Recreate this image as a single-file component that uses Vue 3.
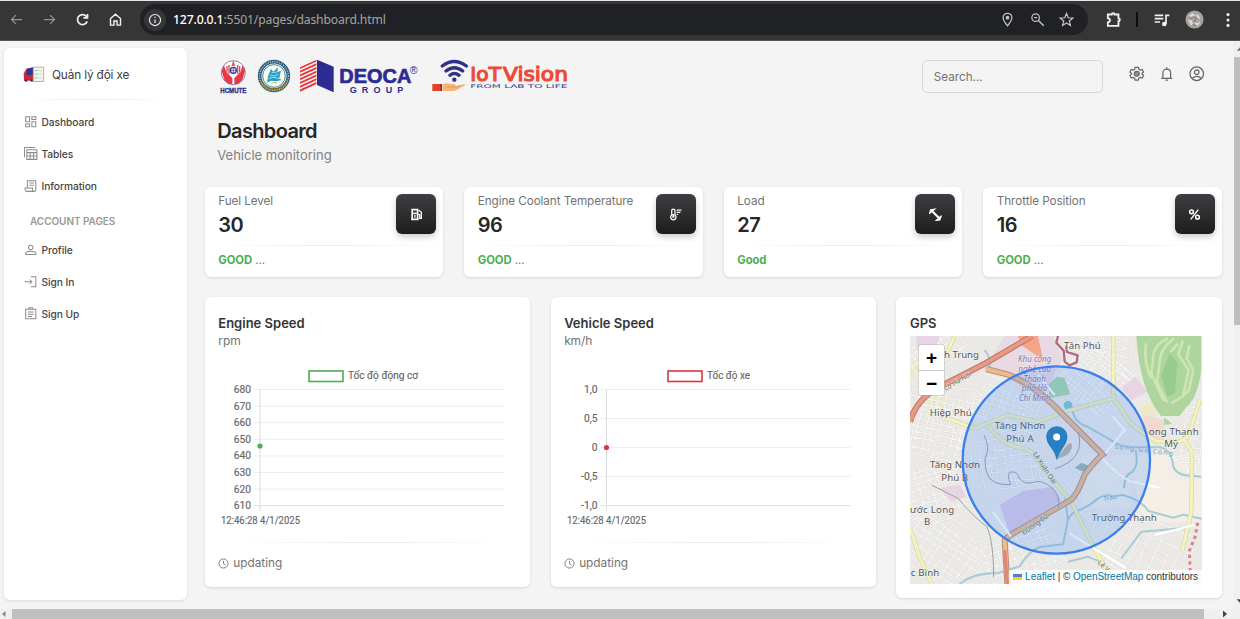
<script setup>
const navItems = [
  { icon: 'dash', label: 'Dashboard' },
  { icon: 'table', label: 'Tables' },
  { icon: 'info', label: 'Information' },
]
const accountItems = [
  { icon: 'profile', label: 'Profile' },
  { icon: 'signin', label: 'Sign In' },
  { icon: 'signup', label: 'Sign Up' },
]
const icons = {
  dash: 'M3 3h7v9H3zM14 3h7v5h-7zM3 16h7v5H3zM14 12h7v9h-7z',
  table: 'M1 18V1h19M5 5h18v17H5zM5 10h18M5 16h18M11 10v12M17 10v12',
  info: 'M6 16V3h15v16a3 3 0 0 1-3 3H5a3 3 0 0 1-3-3v-3h13v3a3 3 0 0 0 3 3M9.500 7h8M9.500 11h8',
  profile: 'M12 4a4 4 0 1 0 .01 0zM3 20.500v-2c0-5 18-5 18 0v2z',
  signin: 'M12 3h9v18h-9M1 12h13M10 8l4 4-4 4',
  signup: 'M3 4h18v17H3zM9 4V1.500h6V4M7 9h10M7 13h10M7 17h7',
}
const stats = [
  { label: 'Fuel Level', value: '30', status: 'GOOD', tail: '...', icon: 'fuel' },
  { label: 'Engine Coolant Temperature', value: '96', status: 'GOOD', tail: '...', icon: 'temp' },
  { label: 'Load', value: '27', status: 'Good', tail: '', icon: 'load' },
  { label: 'Throttle Position', value: '16', status: 'GOOD', tail: '...', icon: 'pct' },
]
const charts = [
  {
    title: 'Engine Speed', unit: 'rpm', legend: 'Tốc độ động cơ', legendX: 91, legendW: 70, color: '#4caf50',
    ticks: ['680', '670', '660', '650', '640', '630', '620', '610'], step: 16.6, dotY: 81, axis: 42, right: 286,
  },
  {
    title: 'Vehicle Speed', unit: 'km/h', legend: 'Tốc độ xe', legendX: 104, legendW: 43, color: '#d9363e',
    ticks: ['1,0', '0,5', '0', '-0,5', '-1,0'], step: 29.05, dotY: 82.5, axis: 42.500, right: 286.500,
  },
]
const stripes = Array.from({ length: 8 }, (_, i) => i * 11.3)

// Minor streets: neighbourhoods, each with its own direction and block size
const districts = [
  { x: 120, y: 170, w: 200, h: 130, a: -32, s: 17 },
  { x: 130, y: 390, w: 240, h: 230, a: 12, s: 21 },
  { x: 110, y: 590, w: 230, h: 190, a: -18, s: 20 },
  { x: 150, y: 775, w: 280, h: 190, a: 33, s: 23 },
  { x: 330, y: 350, w: 210, h: 170, a: 20, s: 20 },
  { x: 350, y: 510, w: 230, h: 160, a: -8, s: 24 },
  { x: 590, y: 250, w: 230, h: 220, a: 39, s: 16 },
  { x: 380, y: 780, w: 260, h: 160, a: -20, s: 22 },
  { x: 740, y: 770, w: 320, h: 190, a: 24, s: 33 },
  { x: 890, y: 420, w: 90, h: 280, a: 8, s: 19 },
  { x: 600, y: 560, w: 230, h: 180, a: -38, s: 46 },
  { x: 640, y: 150, w: 160, h: 110, a: 12, s: 21 },
].map((d) => {
  const parts = []
  const { w, h, s } = d
  for (let i = 0; i * s < w; i++) {
    const j = (i * 7) % 5
    parts.push(`M${-w / 2 + i * s + j} ${-h / 2 + j * 8}l${j - 2} ${h * 0.4}l${(i % 3) * 5 - 5} ${h * 0.5 - j * 8}`)
  }
  for (let i = 0; i * s < h; i++) {
    const j = (i * 3) % 4
    parts.push(`M${-w / 2 + j * 9} ${-h / 2 + i * s + j}l${w * 0.45} ${j * 3 - 4}l${w * 0.48 - j * 9} ${(i % 3) * 6 - 6}`)
  }
  return { path: parts.join(''), transform: `translate(${d.x} ${d.y}) rotate(${d.a})` }
})
</script>

<template>
  <div class="screen">
    <header class="browser">
      <div class="navs">
        <svg class="dim" viewBox="0 0 24 24"><path d="M21 12H4M11 5l-7 7 7 7" /></svg>
        <svg class="dim" viewBox="0 0 24 24"><path d="M3 12h17M13 5l7 7-7 7" /></svg>
        <svg viewBox="0 0 24 24"><path d="M19.500 15a8 8 0 1 1-1.800-8.500L20 9M20 3v6.500h-6.500" stroke-width="2.800" /></svg>
        <svg viewBox="0 0 24 24"><path d="M4 10.500l8-7 8 7V21h-5.500v-6.500h-5V21H4z" stroke-width="2.300" /></svg>
      </div>
      <div class="address">
        <span class="site"><svg viewBox="0 0 24 24"><circle cx="12" cy="12" r="9.500" /><path d="M12 11v6M12 6.500v2" /></svg></span>
        <span class="url"><b>127.0.0.1</b>:5501/pages/dashboard.html</span>
        <div class="addr-icons">
          <svg viewBox="0 0 24 24"><path d="M12 22C8 17 5 13 5 9a7 7 0 0 1 14 0c0 4-3 8-7 13z" /><circle cx="12" cy="9" r="2" fill="currentColor" /></svg>
          <svg viewBox="0 0 24 24"><circle cx="9" cy="9" r="6" /><path d="M13.500 13.500L22 22M6.500 9h5" stroke-width="2.300" /></svg>
          <svg viewBox="0 0 24 24"><path d="M12 2.500l2.800 6.700 7.200.6-5.500 4.700 1.700 7L12 17.700l-6.200 3.800 1.700-7L2 9.800l7.200-.6z" /></svg>
        </div>
      </div>
      <div class="tools">
        <svg class="ext" viewBox="0 0 24 24"><path d="M4 5h5.500a2 2 0 0 1 4 0H19v5.500a2 2 0 0 1 0 4V21H4v-5c4-.5 4-5.500 0-6z" stroke-width="2.600" /></svg>
        <i class="divider"></i>
        <svg class="queue" viewBox="0 0 24 24"><path d="M1 5h13M1 10h13M1 15h8M18 18V5h5" stroke-width="2.500" /><circle cx="15.500" cy="18" r="2.500" fill="currentColor" /></svg>
        <svg class="avatar" viewBox="0 0 20 20"><circle cx="10" cy="10" r="9.500" fill="#aaa2a1" stroke="none" /><path d="M4 6l4-3 3 3-4 2zM11 4l4 2 1 4-3-2zM3 10l4 1 2 4-3 1zM11 11l5 2-3 4-3-3z" fill="#ddd7d5" stroke="none" /><path d="M5 9l4-2 3 2-2 3 4 1M8 15l4 2" stroke="#766d6e" stroke-width="1" /></svg>
        <svg class="more" viewBox="0 0 6 20"><g fill="currentColor" stroke="none"><circle cx="3" cy="4" r="1.700" /><circle cx="3" cy="10" r="1.700" /><circle cx="3" cy="16" r="1.700" /></g></svg>
      </div>
    </header>

    <div class="page">
      <aside class="sidebar">
        <div class="brand">
          <svg viewBox="0 0 66 50">
            <path d="M2 22l8-14 22-5v41H3z" fill="#d4283c" /><path d="M12 8l19-5v22l-22 3z" fill="#303590" /><path d="M3 28h27v13H3z" fill="#c92639" />
            <circle cx="9" cy="43" r="4" fill="#453140" /><circle cx="26" cy="43" r="4" fill="#453140" />
            <path d="M31 3h31v43H31z" fill="#f3f6ed" stroke="#e0a184" stroke-width="3" />
            <path d="M36 12l3 3 4-5M36 23l3 3 4-5M36 34l3 3 4-5" stroke="#40ac98" stroke-width="2" fill="none" /><path d="M46 13h11M46 24h11M46 35h11" stroke="#b1cabb" stroke-width="2" />
          </svg>
          <span>Quản lý đội xe</span>
        </div>
        <i class="fade-line"></i>
        <nav>
          <a v-for="n in navItems" :key="n.label"><svg viewBox="0 0 24 24"><path :d="icons[n.icon]" /></svg>{{ n.label }}</a>
          <h6>ACCOUNT PAGES</h6>
          <a v-for="n in accountItems" :key="n.label"><svg viewBox="0 0 24 24"><path :d="icons[n.icon]" /></svg>{{ n.label }}</a>
        </nav>
      </aside>

      <main>
        <div class="topbar">
          <svg class="logos" viewBox="54 36 1056 117">
            <circle cx="100" cy="83" r="36" fill="#fff" stroke="#8b83b0" stroke-width="3" />
            <path d="M100 45l-6 18h12z" fill="#ef5b61" />
            <path d="M97 117V99L79 82l-7-21-7 17 8 27 13 12zM103 117V99l18-17 7-21 7 17-8 27-13 12z" fill="#e43a46" />
            <path d="M81 83V63M87 87V60M119 83V63M113 87V60" stroke="#e34854" stroke-width="4" />
            <circle cx="100" cy="76" r="9" fill="#f2f2fb" stroke="#34388f" stroke-width="4" /><path d="M91 76h18M100 67v18" stroke="#34388f" stroke-width="2" />
            <text x="61" y="143" class="arial" font-size="20" font-weight="700" fill="#2e3184" textLength="78" lengthAdjust="spacingAndGlyphs" stroke="#2e3184" stroke-width="1">HCMUTE</text>
            <circle cx="222" cy="93" r="43" fill="#ecf5ef" stroke="#345f80" stroke-width="11" />
            <path d="M183 110a43 43 0 0 0 78 0" fill="none" stroke="#756f37" stroke-width="10" />
            <circle cx="222" cy="93" r="43" fill="none" stroke="#b3cfd0" stroke-width="4" stroke-dasharray="3 4" />
            <circle cx="222" cy="93" r="34" fill="#f5faf5" stroke="#488c90" stroke-width="3" />
            <path d="M204 94l9-22 7 8 14-13-2 15 11-5-5 22 6 6-15 4-16-2-12 6z" fill="#269fc7" />
            <path d="M210 90l12 3 14-5M215 83l16-2M205 100l16-3 20 4" stroke="#e3f2f5" stroke-width="2" fill="none" /><path d="M215 113h16" stroke="#d3b47d" stroke-width="3" />
            <clipPath id="stripeClip"><path d="M300 66l50-22v76l-50 23z" /></clipPath>
            <g clip-path="url(#stripeClip)" stroke="#e6363d" stroke-width="5.500"><path v-for="s in stripes" :key="s" :d="`M298 ${70 + s}l54-25`" /></g>
            <path d="M351 44l50 21v77l-50-22z" fill="#2c2b92" />
            <text x="418" y="113" class="arial" font-size="59" font-weight="700" fill="#2c2b92" textLength="216" lengthAdjust="spacingAndGlyphs" stroke="#2c2b92" stroke-width="2">DEOCA</text>
            <text x="629" y="87" class="arial" font-size="32" fill="#2c2b92">®</text>
            <text x="449" y="143" class="arial" font-size="27" font-weight="700" fill="#2c2b92" textLength="161">GROUP</text>
            <g fill="none" stroke="#303187" stroke-width="10" stroke-linecap="round"><path d="M727 63q35-27 72 0M738 78q25-20 50 0M750 91q13-11 27 0" /></g>
            <circle cx="763" cy="104" r="6.500" fill="#303187" />
            <path d="M697 117h29v21h-29z" fill="#e44127" /><path d="M720 117h6v21h-6z" fill="#a72f34" />
            <path d="M727 119q12-8 23-2h14q6 4-1 8l29-8q10 0-4 8l-25 13h-36z" fill="#f2b574" /><path d="M740 126h24l18-4" stroke="#d98d58" stroke-width="2" fill="none" />
            <g class="tech" font-size="58" fill="#ee4937" stroke="#ee4937" stroke-width="3.500"><text x="811" y="107" textLength="92" lengthAdjust="spacingAndGlyphs">IoT</text><text x="909" y="107" textLength="195" lengthAdjust="spacingAndGlyphs">Vision</text></g>
            <text x="811" y="130" class="tech" font-size="15" font-weight="500" fill="#3e3f91" textLength="291" lengthAdjust="spacingAndGlyphs">FROM LAB TO LIFE</text>
          </svg>
          <div class="search">Search...</div>
          <div class="user-icons">
            <svg viewBox="0 0 24 24"><path d="M9.500 2h5l.7 3 2.300 1.300 3-1 2 4-2.300 2v1.400l2.300 2-2 4-3-1-2.300 1.300-.7 3h-5l-.7-3-2.300-1.300-3 1-2-4 2.300-2v-1.400l-2.300-2 2-4 3 1L8.800 5z" /><circle cx="12" cy="12" r="3.800" fill="#666" fill-opacity=".7" /></svg>
            <svg viewBox="0 0 24 24"><path d="M3.500 19h17M6 19v-8c0-8 12-8 12 0v8M12 5V2M10 22h4" /></svg>
            <svg viewBox="0 0 24 24"><circle cx="12" cy="12" r="10.500" /><circle cx="12" cy="9.500" r="3.500" /><path d="M5 19q7-6 14 0" /></svg>
          </div>
        </div>
        <h1>Dashboard</h1>
        <p class="sub">Vehicle monitoring</p>

        <section class="stats">
          <article v-for="s in stats" :key="s.label" class="card stat">
            <div class="stat-head">
              <div><p>{{ s.label }}</p><strong>{{ s.value }}</strong></div>
              <span class="tile">
                <svg viewBox="0 0 24 24">
                  <template v-if="s.icon === 'fuel'"><path d="M4 3h10v18H4zM2 21h14M6 10h6" stroke-width="3" /><path d="M16 4l5 4v11h-3v-7h-3M9 13v5" stroke-width="2.300" /></template>
                  <template v-else-if="s.icon === 'temp'"><path d="M5 13V5a3 3 0 0 1 6 0v8a5 5 0 1 1-6 0zM14 4h9M14 8h7M14 12h3" stroke-width="2.300" /><path d="M8 11v7" stroke-width="4" /></template>
                  <template v-else-if="s.icon === 'load'"><path d="M6 6l12 12" stroke-width="4" /><path d="M1 10l2-7 8-1zM23 14l-3 8-7 1z" fill="currentColor" stroke-width="2" /></template>
                  <template v-else><circle cx="6.500" cy="7" r="3.500" stroke-width="2.700" /><circle cx="17.500" cy="17" r="3.500" stroke-width="2.700" /><path d="M19 3L5 21" stroke-width="2.700" /></template>
                </svg>
              </span>
            </div>
            <i class="fade-line"></i>
            <div class="status"><b>{{ s.status }}</b> {{ s.tail }}</div>
          </article>
        </section>

        <section class="panels">
          <article v-for="c in charts" :key="c.title" class="card chart">
            <h2>{{ c.title }}</h2>
            <p>{{ c.unit }}</p>
            <svg class="plot" viewBox="0 0 298 170">
              <rect :x="c.legendX" y="6" width="34" height="10.500" fill="none" :stroke="c.color" stroke-width="1.600" />
              <text :x="c.legendX + 39" y="13.500" :textLength="c.legendW" lengthAdjust="spacingAndGlyphs">{{ c.legend }}</text>
              <template v-for="(t, i) in c.ticks" :key="t">
                <path :d="`M${c.axis - 6} ${24.500 + i * c.step}H${c.right}`" :stroke="i === c.ticks.length - 1 ? '#dfdfdf' : '#eeeeee'" />
                <text :x="c.axis - 9" :y="28 + i * c.step" text-anchor="end">{{ t }}</text>
              </template>
              <path :d="`M${c.axis} 24V146`" stroke="#dcdcdc" />
              <circle :cx="c.axis" :cy="c.dotY" r="2.600" :fill="c.color" />
              <text x="3" y="158.500" textLength="79" lengthAdjust="spacingAndGlyphs">12:46:28 4/1/2025</text>
            </svg>
            <i class="fade-line"></i>
            <footer><svg viewBox="0 0 24 24"><circle cx="12" cy="12" r="10" /><path d="M12 6v6.500l4.500 3" /></svg>updating</footer>
          </article>

          <article class="card gps">
            <h2>GPS</h2>
            <div class="map">
              <svg viewBox="46 123 876 744" preserveAspectRatio="none">
                <path d="M46 123h876v744H46z" fill="#ebe9e6" />
                <path d="M700 480h222v200H745zM560 480h150v160H560z" fill="#f3eee6" />
                <path d="M46 210q45-65 120-55l10 18-60 45-70 30zM75 300h90l-20 35H78zM735 345l55-42 25 20-50 50z" fill="#f0e8b7" opacity=".7" />
                <g v-for="(d, i) in districts" :key="i" :transform="d.transform" fill="none"><path :d="d.path" stroke="#d6d5d3" stroke-width="5" /><path :d="d.path" stroke="#f8f7f5" stroke-width="3.500" /></g>
                <path d="M330 123h145l28 70-60 120-120-75-60-10z" fill="#e8d9e4" /><path d="M370 123h60l15 72-65-45z" fill="#f5a488" />
                <path d="M315 630l70-42 90-12 25 42-155 97z" fill="#dbcae4" /><path d="M65 123h70l-10 30-60 5zM135 580l60-12 20 38-45 14zM680 280l40-35 40 45-50 25z" fill="#e7d5e4" />
                <path d="M745 360l65 15-5 58-70-15z" fill="#f2d8ce" />
                <path d="M725 123h195v100q-10 85-46 115l-20 25h-55q-65-80-74-240z" fill="#afd59e" />
                <g stroke="#cde5b3" stroke-width="8" fill="none" stroke-linejoin="round"><path d="M820 130q-35 15-43 45l-7 60 22 50 15 34M838 130q-42 30-43 72l-8 60 31 61M865 136l-14 42 31 48-17 78-35 21M884 150l-8 40 20 36-14 61-18 15M754 145q-8 55 15 105M850 146l-22 25" /></g>
                <path d="M826 175l22 30-7 90-22 10-20-66z" fill="#98cc8d" /><path d="M487 245l-27 25 5 40 62-12-18-50zM808 368l12 7 12 12-24 3z" fill="#abd8a7" /><path d="M540 518l20-15 30 12-18 18z" fill="#99b8b1" />
                <circle cx="520" cy="331" r="13" fill="#7cc9cd" />
                <g fill="none" stroke="#a9cbd5" stroke-width="6" stroke-linejoin="round"><path d="M533 335q0 45 45 60l70 40q20 20 75 22l74 0q35 10 38 55 10 32 57 30l28 3M722 465q12 40-8 65-25 8-26 50M520 673q15-25 40-30 30-15 40-25 30-24 55-14l30-4q55 15 76 48l75 20 30-9 55 12M520 673l-15 75-70 8q-35 15-60 58l-65 20q-75 0-115 33M270 165q30 40 5 65M510 590l10 90M520 800l60-15 50 20M680 790l60-80 140-12" /></g>
                <g fill="none" stroke="#d8d8aa" stroke-width="13" stroke-linejoin="round"><path d="M656 123v187l-135 37-92 33-90-20-99 40-107-39M656 315q20 15 40 55 20 25 50 45l40 24h70l25-15 35-110M865 430l27 40-2 180-28 120M282 395q50 65 110 65 25 10 50 55l70 85 20 25 65 132 35 62M46 700l30 90 35 77M180 123l-20 45" /></g>
                <g fill="none" stroke="#f4f2bd" stroke-width="9" stroke-linejoin="round"><path d="M656 123v187l-135 37-92 33-90-20-99 40-107-39M656 315q20 15 40 55 20 25 50 45l40 24h70l25-15 35-110M865 430l27 40-2 180-28 120M282 395q50 65 110 65 25 10 50 55l70 85 20 25 65 132 35 62M46 700l30 90 35 77M180 123l-20 45" /></g>
                <path d="M46 380q22-75 100-110l126-65 140-82" fill="none" stroke="#c17868" stroke-width="18" /><path d="M46 380q22-75 100-110l126-65 140-82" fill="none" stroke="#e79b84" stroke-width="11" />
                <path d="M275 222l65 17q65 25 130 85l154 155q-20 15-54 60-20 55-40 75l-165 96q-35 20-35 25l8 132" fill="none" stroke="#b99076" stroke-width="18" /><path d="M275 222l65 17q65 25 130 85l154 155q-20 15-54 60-20 55-40 75l-165 96q-35 20-35 25l8 132" fill="none" stroke="#eebb8e" stroke-width="12" />
                <path d="M330 765l8 102" stroke="#e28775" stroke-width="10" />
                <g fill="none" stroke="#a09faa" stroke-width="3" stroke-linejoin="round"><path d="M268 420q20 40 3 70 1 35 5 42 10 40 72 37-15-35 1-38 20-3 24 18 18 20 39 14 30-12 60 16 25 20 20 61M110 570l80 40q50 60 87 85 20 45 20 152M550 410q25 80-70 112" /></g>
                <g stroke="#fff" fill="none" stroke-width="6"><path d="M624 490q45 50 80 68l91 20M655 365l35 40-58 70M294 650l55 75M525 715l170 105M430 240l50 60M780 720l120-30" /></g>
                <path d="M490 123l-5 20 22 24 3 33 14 11 22-9 3-21-32-10-3-18" fill="none" stroke="#b06a86" stroke-width="7" stroke-linejoin="round" />
                <path d="M909 683l-7 40-18 45 3 70" fill="none" stroke="#e0808c" stroke-width="9" stroke-dasharray="10 10" />
                <g class="map-text" font-size="29">
                  <text x="148" y="188" textLength="105">h Trung</text><text x="508" y="163" textLength="110">Tân Phú</text><text x="105" y="363" textLength="126">Hiệp Phú</text>
                  <text x="300" y="403" textLength="152">Tăng Nhơn</text><text x="335" y="442" textLength="82">Phú A</text><text x="106" y="519" textLength="150">Tăng Nhơn</text><text x="140" y="557" textLength="80">Phú B</text>
                  <text x="46" y="653" textLength="133">ước Long</text><text x="88" y="691">B</text><text x="48" y="844" textLength="86">c Bình</text><text x="762" y="419" textLength="150">ong Thạnh</text><text x="809" y="457" textLength="41">Mỹ</text><text x="591" y="679" textLength="195">Trường Thạnh</text>
                </g>
                <g class="map-text tech-park" font-size="24" text-anchor="middle"><text x="420" y="202">Khu công</text><text x="420" y="231">nghệ cao</text><text x="420" y="260">Thành</text><text x="420" y="289">phố Hồ</text><text x="420" y="318">Chí Minh</text></g>
                <g class="map-text road" font-size="20"><text transform="translate(153 288) rotate(-31)" textLength="91">Lộ Hà Nội</text><text transform="translate(414 477) rotate(56)" textLength="110">Lê Xuân Oai</text><text transform="translate(388 721) rotate(-36)" textLength="92">Đường D2</text><text transform="translate(608 805) rotate(42)">Lê V</text><text class="river" transform="translate(660 461) rotate(7)" textLength="175">sông Gò Công</text><text class="river" transform="translate(627 618) rotate(-10)">Trao</text></g>
                <circle cx="485" cy="495" r="281" fill="#3388ff" fill-opacity=".2" stroke="#3b7fed" stroke-width="7" />
                <path d="M488 489l26-35q21-20 17 5-9 28-43 30" fill="#555" opacity=".35" />
                <path d="M487 493q-5-22-17-35-14-17-14-32c0-41 61-41 61 0 0 15-10 26-16 37q-10 15-14 30z" fill="#2680c3" stroke="#1d6da8" stroke-width="2" /><circle cx="486" cy="426" r="10.500" fill="#fff" />
              </svg>
              <div class="zoom"><span>+</span><span>−</span></div>
              <div class="credit"><i class="flag"></i><a>Leaflet</a> | © <a>OpenStreetMap</a> contributors</div>
            </div>
          </article>
        </section>
      </main>

      <div class="vscroll"><svg viewBox="0 0 7 14"><path d="M3 9l4-4v4z" fill="#777" /></svg><i></i><svg class="down" viewBox="0 0 7 14"><path d="M3 5h4v4z" fill="#444" /></svg></div>
    </div>
    <div class="hscroll"><svg viewBox="0 0 12 10"><path d="M5.500 2v6L2 5z" fill="#888" /></svg><i></i><svg class="right" viewBox="0 0 12 10"><path d="M3 1.500v7L7 5z" fill="#444" /></svg></div>
  </div>
</template>

<style>
html, body { margin: 0; overflow: hidden; }
</style>
<style scoped>
* { box-sizing: border-box; }
.screen { width: 1240px; height: 619px; display: flex; flex-direction: column; background: #f4f4f4; font-family: Inter, sans-serif; color: #737373; overflow: hidden; }
svg { display: block; flex: none; }
p, h1, h2, h6 { margin: 0; }

.browser { height: 41px; flex: none; border-top: 1px solid #e8e8e8; border-bottom: 1px solid #555; background: #363636; display: flex; align-items: center; padding: 0 8px 2px 9px; color: #f0f0f0; }
.browser svg { fill: none; stroke: currentColor; stroke-width: 2; }
.navs { display: flex; gap: 18px; width: 131px; }
.navs svg { width: 15px; height: 15px; }
.navs .dim { color: #929292; }
.address { width: 948px; height: 31px; border-radius: 16px; background: #202124; display: flex; align-items: center; padding: 0 14px 0 4px; }
.site { width: 22px; height: 22px; border-radius: 50%; background: #353638; display: grid; place-items: center; }
.site svg { width: 14px; height: 14px; }
.url { margin-left: 7px; font: 12.2px/16px "Noto Sans", sans-serif; color: #a4a4a4; letter-spacing: -.15px; }
.url b { color: #fff; font-weight: 500; }
.addr-icons { margin-left: auto; display: flex; gap: 14.500px; color: #c4c4c4; }
.addr-icons svg { width: 15px; height: 15px; }
.tools { display: flex; align-items: center; flex: 1; padding-left: 17px; }
.ext { width: 17px; height: 17px; }
.divider { width: 2px; height: 15px; background: #0d0d0d; margin-left: 14px; }
.queue { width: 16px; height: 16px; margin-left: 16px; }
.avatar { width: 19px; height: 19px; margin-left: 15px; }
.more { width: 6px; height: 18px; margin-left: 21px; }

.page { height: 568px; flex: none; display: flex; }
.sidebar { width: 183px; height: 552px; margin: 7px 0 0 4px; flex: none; background: #fff; border-radius: 6px; box-shadow: 0 1px 3px #0000001c; }
.brand { display: flex; align-items: center; height: 51px; padding: 2px 0 0 19px; gap: 7px; font-size: 11.8px; color: #404040; letter-spacing: -.15px; }
.brand svg { width: 22px; height: 17px; }
.fade-line { display: block; height: 1px; background: linear-gradient(90deg, transparent, #ededed 45%, #ededed 60%, transparent); }
.sidebar > .fade-line { margin: 0 18px; }
nav { padding: 6px 0 0 20px; }
nav a { height: 32px; display: flex; align-items: center; gap: 4px; font-size: 10.2px; font-weight: 500; color: #444; letter-spacing: -.05px; }
nav svg { width: 13.500px; height: 13.500px; fill: none; stroke: #8c8c8c; stroke-width: 1.8; }
h6 { height: 32px; padding: 1px 0 0 6px; line-height: 36px; font-size: 10px; font-weight: 600; color: #999; letter-spacing: -.05px; }

main { width: 1017px; margin-left: 17.800px; flex: none; }
.topbar { height: 74px; display: flex; align-items: flex-start; padding: 16px 17px 0 13px; }
.logos { width: 352px; height: 39px; }
.arial { font-family: "Liberation Sans", Arial, sans-serif; }
.tech { font-family: "DejaVu Sans", sans-serif; }
.search { width: 183px; height: 33px; margin: 3px 0 0 352px; border: 1px solid #d5d9d9; border-radius: 5px; padding: 0 11px; font-size: 11.7px; line-height: 32px; }
.user-icons { display: flex; gap: 14.500px; margin: 9px 0 0 26px; }
.user-icons svg { width: 15.500px; height: 15.500px; fill: none; stroke: #666; stroke-width: 1.9; }
h1 { margin: 4px 0 0 12.500px; font-size: 20px; line-height: 24px; letter-spacing: -.65px; font-weight: 600; color: #262626; }
.sub { margin: 2px 0 0 12.500px; font-size: 13px; line-height: 20px; color: #818181; }
.stats { margin-top: 22px; display: grid; grid-template-columns: repeat(4, 1fr); gap: 21px; }
.card { background: #fff; border-radius: 6px; box-shadow: 0 1px 3px #00000020; }
.stat { height: 90px; }
.stat-head { height: 58px; display: flex; justify-content: space-between; padding: 7px 7px 0 13.500px; }
.stat-head p { margin-top: -1px; font-size: 11.7px; line-height: 17px; white-space: nowrap; letter-spacing: -.07px; }
.stat-head strong { display: block; margin-top: 1px; font-size: 20px; line-height: 28px; font-weight: 600; color: #262626; letter-spacing: -.5px; }
.tile { width: 40px; height: 40px; border-radius: 6px; background: linear-gradient(#3e3d42, #1d1d1d); box-shadow: 0 3px 6px #00000035; display: grid; place-items: center; color: #fff; }
.tile svg { width: 13px; height: 13px; fill: none; stroke: currentColor; }
.stat > .fade-line { margin: 0 12px; }
.status { padding: 6px 13.500px; font-size: 11.3px; line-height: 17px; }
.status b { color: #4caf50; font-weight: 700; letter-spacing: -.1px; }

.panels { margin-top: 20px; display: grid; grid-template-columns: repeat(3, minmax(0, 1fr)); gap: 20.500px; align-items: start; }
.chart { height: 290px; padding: 16px 13.500px 0; }
h2 { font-size: 13px; line-height: 20px; color: #343434; font-weight: 600; }
.chart > p { margin-top: -1px; font-size: 12px; line-height: 17px; letter-spacing: -.1px; }
.plot { width: 298px; height: 170px; margin-top: 16px; overflow: visible; font-family: Roboto, sans-serif; font-size: 10.3px; }
.plot text { fill: #666; stroke: #666; stroke-width: .15; }
.chart > .fade-line { margin: 7px 12px 0; }
footer { display: flex; align-items: center; gap: 4px; margin-top: 12px; font-size: 11.8px; line-height: 17px; }
footer svg { width: 11px; height: 11px; fill: none; stroke: #777; stroke-width: 2; }
.gps { height: 301px; padding: 16px 13.500px 0; }
.map { position: relative; width: 292px; height: 248px; margin-top: 3px; overflow: hidden; font-family: "Liberation Sans", Arial, sans-serif; }
.map > svg { width: 292px; height: 248px; }
.map-text { font-family: "Noto Sans", sans-serif; fill: #555; stroke: #fff; stroke-width: 3; paint-order: stroke; stroke-opacity: .6; }
.tech-park { font-style: italic; fill: #8c6c99; }
.road { fill: #65604b; }
.river { fill: #6691a8; }
.zoom { position: absolute; left: 9px; top: 9px; width: 25px; height: 50px; background: #fff; box-shadow: 0 0 0 1px #aaa6; border-radius: 2px; }
.zoom span { display: grid; place-items: center; height: 25px; color: #000; font: 700 19px/25px "Liberation Sans", sans-serif; }
.zoom span + span { border-top: 1px solid #ccc; }
.credit { position: absolute; right: 0; bottom: 0; height: 14px; padding: 0 4px; background: #fffc; color: #333; font-size: 10px; line-height: 14px; white-space: nowrap; letter-spacing: -.03px; }
.credit a { color: #0078a8; }
.flag { display: inline-block; width: 9px; height: 6px; margin-right: 3px; background: linear-gradient(#4c7be1 50%, #ffd500 50%); }

.vscroll { width: 6px; margin-left: 12.200px; background: #f0f0f0; flex: none; display: flex; flex-direction: column; }
.vscroll svg { width: 6px; height: 16px; }
.vscroll i { height: 268px; background: #bebebe; }
.vscroll .down { margin-top: auto; }
.hscroll { height: 10px; background: #f0f0f0; display: flex; }
.hscroll svg { width: 12px; height: 10px; }
.hscroll i { width: 1192px; background: #c0c0c0; }
.hscroll .right { margin-left: 16px; }
</style>
